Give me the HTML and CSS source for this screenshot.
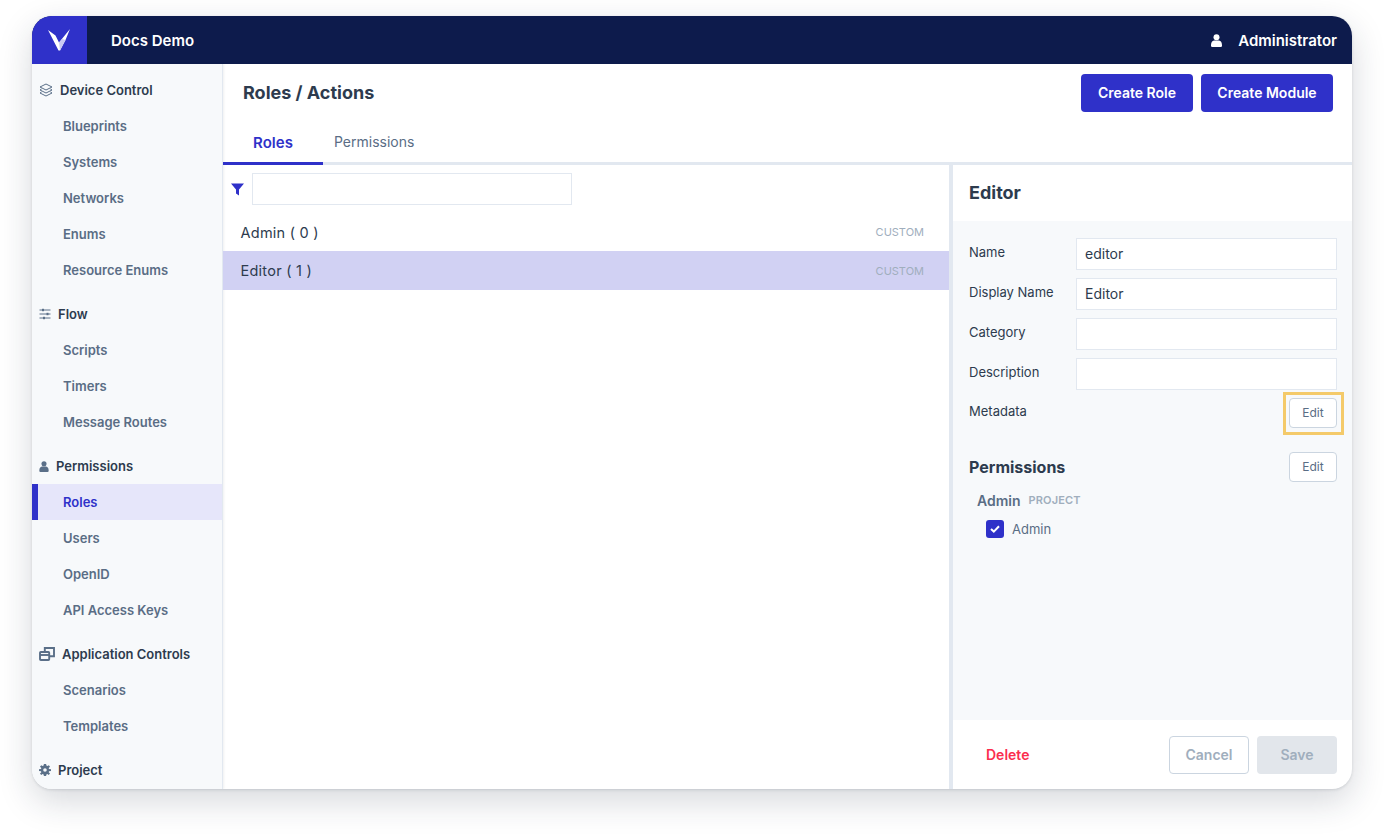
FILE: index.html
```html
<!DOCTYPE html>
<html lang="en">
<head>
<meta charset="utf-8">
<title>Roles / Actions</title>
<link rel="stylesheet" href="styles.css">
</head>
<body>
<div class="window">
  <header class="topbar">
    <div class="logo">
      <svg width="22" height="22" viewBox="0 0 22 22"><path d="M0 1 L7.5 6.5 L11 13.5 L22 0 L17.5 11 L12 21.5 L10.5 21.5 Z" fill="#fff"/><path d="M12 21.5 L11 13.5 L14 10 L17.5 11 Z" fill="#c9cbf3"/></svg>
    </div>
    <div class="app-name">Docs Demo</div>
    <div class="user">
      <svg class="user-icon" width="11" height="13" viewBox="0 0 11 13"><circle cx="5.5" cy="3.2" r="3" fill="#fff"/><path d="M0 11 C0 8 1.8 6.6 3.4 6.6 H7.6 C9.2 6.6 11 8 11 11 V11.8 Q11 13 9.8 13 H1.2 Q0 13 0 11.8 Z" fill="#fff"/></svg>
      <span>Administrator</span>
    </div>
  </header>
  <div class="content">
    <nav class="sidebar">
      <div class="nav-head">
        <svg class="nav-icon" width="14" height="14" viewBox="0 0 14 14" fill="none" stroke="#5a6f88" stroke-width="1" stroke-linejoin="round"><path d="M7 1 L13 4 L7 7 L1 4 Z"/><path d="M2.6 6 L1 7 L7 10 L13 7 L11.4 6"/><path d="M2.6 9 L1 10 L7 13 L13 10 L11.4 9"/></svg>
        <span class="head-label">Device Control</span>
      </div>
      <a class="nav-item">Blueprints</a>
      <a class="nav-item">Systems</a>
      <a class="nav-item">Networks</a>
      <a class="nav-item">Enums</a>
      <a class="nav-item">Resource Enums</a>
      <div class="nav-head spaced">
        <svg class="nav-icon" width="12" height="12" viewBox="0 0 12 12" fill="none" stroke="#5a6f88" stroke-width="1"><path d="M0.5 2 H11.5 M0.5 6 H11.5 M0.5 10 H11.5"/><rect x="3" y="0.8" width="2" height="2.4" fill="#5a6f88" stroke="none"/><rect x="7.5" y="4.8" width="2" height="2.4" fill="#5a6f88" stroke="none"/><rect x="4" y="8.8" width="2" height="2.4" fill="#5a6f88" stroke="none"/></svg>
        <span class="head-label">Flow</span>
      </div>
      <a class="nav-item">Scripts</a>
      <a class="nav-item">Timers</a>
      <a class="nav-item">Message Routes</a>
      <div class="nav-head spaced">
        <svg class="nav-icon" width="10" height="11" viewBox="0 0 11 13"><circle cx="5.5" cy="3.2" r="3" fill="#5a6f88"/><path d="M0 11 C0 8 1.8 6.6 3.4 6.6 H7.6 C9.2 6.6 11 8 11 11 V11.8 Q11 13 9.8 13 H1.2 Q0 13 0 11.8 Z" fill="#5a6f88"/></svg>
        <span class="head-label">Permissions</span>
      </div>
      <a class="nav-item active">Roles</a>
      <a class="nav-item">Users</a>
      <a class="nav-item">OpenID</a>
      <a class="nav-item">API Access Keys</a>
      <div class="nav-head spaced">
        <svg class="nav-icon" width="16" height="14" viewBox="0 0 16 14" fill="none" stroke="#5a6f88" stroke-width="1.9"><rect x="1" y="5" width="9.2" height="8" rx="0.8"/><path d="M1 8 H10.2"/><path d="M5.8 4.6 V1 H15 V9.2 H10.4"/></svg>
        <span class="head-label">Application Controls</span>
      </div>
      <a class="nav-item">Scenarios</a>
      <a class="nav-item">Templates</a>
      <div class="nav-head spaced">
        <svg class="nav-icon" width="12" height="12" viewBox="0 0 12 12"><path fill="#5a6f88" fill-rule="evenodd" d="M4.9 0 H7.1 L7.4 1.6 L8.5 2.1 L9.9 1.2 L11 2.8 L9.7 3.9 L10 5 L12 5.3 V6.9 L10 7.2 L9.7 8.2 L11 9.4 L9.7 11 L8.4 10 L7.4 10.4 L7.1 12 H4.9 L4.6 10.4 L3.5 10 L2.2 11 L1 9.4 L2.3 8.2 L2 7.2 L0 6.9 V5.2 L2 4.9 L2.3 3.9 L1 2.7 L2.2 1.2 L3.5 2.1 L4.6 1.6 Z M6 4.2 A1.8 1.8 0 1 0 6 7.8 A1.8 1.8 0 1 0 6 4.2 Z"/></svg>
        <span class="head-label">Project</span>
      </div>
    </nav>
    <main class="main">
      <div class="page-head">
        <h1 class="page-title">Roles / Actions</h1>
        <div class="page-actions">
          <button class="btn-primary btn-role">Create Role</button>
          <button class="btn-primary btn-module">Create Module</button>
        </div>
      </div>
      <div class="tabs">
        <div class="tab tab-active">Roles</div>
        <div class="tab tab-perm">Permissions</div>
      </div>
      <div class="panes">
        <section class="list-pane">
          <div class="filter">
            <svg width="13" height="13" viewBox="0 0 13 13"><path d="M0 0.5 H13 L8 6.5 V12.5 L5 10.5 V6.5 Z" fill="#2f31c9"/></svg>
            <div class="text-input filter-input"></div>
          </div>
          <div class="list-row"><span>Admin ( 0 )</span><span class="tag">CUSTOM</span></div>
          <div class="list-row selected"><span>Editor ( 1 )</span><span class="tag">CUSTOM</span></div>
        </section>
        <aside class="detail">
          <div class="detail-head">Editor</div>
          <div class="detail-body">
            <div class="field"><label>Name</label><div class="text-input value">editor</div></div>
            <div class="field"><label>Display Name</label><div class="text-input value">Editor</div></div>
            <div class="field"><label>Category</label><div class="text-input value"></div></div>
            <div class="field"><label>Description</label><div class="text-input value"></div></div>
            <div class="meta-row"><label>Metadata</label><div class="highlight"><button class="btn-edit">Edit</button></div></div>
            <div class="perm-row"><h2 class="perm-title">Permissions</h2><button class="btn-edit">Edit</button></div>
            <div class="perm-group"><strong>Admin</strong><span>PROJECT</span></div>
            <div class="perm-check">
              <span class="checkbox"><svg width="10" height="8" viewBox="0 0 10 8" fill="none" stroke="#fff" stroke-width="2"><path d="M1 4 L3.8 6.6 L9 1.2"/></svg></span>
              <span>Admin</span>
            </div>
          </div>
          <div class="detail-foot">
            <span class="delete">Delete</span>
            <div class="foot-actions">
              <button class="btn-cancel">Cancel</button>
              <button class="btn-save">Save</button>
            </div>
          </div>
        </aside>
      </div>
    </main>
  </div>
</div>
</body>
</html>
```
FILE: styles.css
```css
* { box-sizing: border-box; }
html, body { height: 100%; }
body {
  margin: 0;
  padding: 16px 32px 48px;
  background: #fff;
  font-family: Inter, "Liberation Sans", sans-serif;
  color: #2d3b4e;
  overflow: hidden;
}
button { font-family: inherit; cursor: pointer; padding: 0 0 2px; }
.window {
  width: 1320px;
  height: 773px;
  border-radius: 20px;
  overflow: hidden;
  display: flex;
  flex-direction: column;
  background: #fff;
  box-shadow: 0 12px 34px rgba(30, 40, 60, 0.18), 0 1px 3px rgba(30, 40, 60, 0.14);
}
.topbar {
  height: 48px;
  flex: none;
  display: flex;
  align-items: center;
  background: #0d1b4c;
  color: #fff;
  font-size: 15px;
  font-weight: 600;
}
.logo {
  width: 55px;
  height: 48px;
  background: #2f31c9;
  display: flex;
  align-items: center;
  justify-content: center;
  padding-right: 1px;
}
.app-name { margin-left: 24px; }
.user {
  margin-left: auto;
  margin-right: 15px;
  display: flex;
  align-items: center;
  gap: 16px;
}
.content { flex: 1; display: flex; min-height: 0; }
.sidebar {
  width: 191px;
  flex: none;
  background: #f7f9fb;
  border-right: 1px solid #e2e8f0;
  box-shadow: 1px 0 2px rgba(45, 59, 78, 0.08);
  overflow: hidden;
  padding-top: 8px;
  font-size: 13px;
  font-weight: 600;
}
.nav-head {
  height: 36px;
  padding-left: 7px;
  display: flex;
  align-items: center;
  color: #2d3b4e;
}
.nav-head.spaced { margin-top: 8px; }
.head-label { margin-left: 7px; }
.nav-item {
  display: flex;
  align-items: center;
  height: 36px;
  padding-left: 31px;
  color: #5a6d85;
}
.nav-item.active {
  background: #e6e6fa;
  color: #2f31c9;
  border-left: 6px solid #2f31c9;
  padding-left: 25px;
}
.main { flex: 1; min-width: 0; display: flex; flex-direction: column; }
.page-head {
  height: 58px;
  flex: none;
  display: flex;
  align-items: center;
  justify-content: space-between;
  padding: 0 19px 0 20px;
}
.page-title { margin: 0 0 2px; font-size: 18px; font-weight: 700; color: #2d3b4e; }
.page-actions { display: flex; gap: 8px; }
.btn-primary {
  height: 38px;
  border: 0;
  border-radius: 4px;
  background: #2f31c9;
  color: #fff;
  font-size: 14px;
  font-weight: 600;
}
.btn-role { width: 112px; }
.btn-module { width: 132px; }
.tabs {
  height: 43px;
  flex: none;
  display: flex;
  border-bottom: 3px solid #e2e8f0;
  font-size: 14px;
}
.tab {
  height: 43px;
  display: flex;
  align-items: center;
  justify-content: center;
  padding-bottom: 4px;
  color: #5a6d85;
}
.tab-active {
  width: 100px;
  color: #2f31c9;
  font-size: 15px;
  font-weight: 600;
  border-bottom: 3px solid #2f31c9;
  padding-bottom: 0;
}
.tab-perm { margin-left: 11px; }
.panes { flex: 1; display: flex; min-height: 0; }
.list-pane {
  width: 730px;
  flex: none;
  border-right: 4px solid #e2e8f0;
}
.filter {
  height: 48px;
  padding: 8px 0 8px 8px;
  display: flex;
  align-items: center;
  gap: 8px;
}
.text-input {
  height: 32px;
  background: #fff;
  border: 1px solid #e2e8f0;
}
.filter-input { width: 320px; }
.list-row {
  height: 38px;
  display: flex;
  align-items: center;
  justify-content: space-between;
  padding: 0 25px 0 17.5px;
  font-size: 14.5px;
  letter-spacing: 0.25px;
  color: #2d3b4e;
}
.list-row.selected { background: #d1d1f3; height: 39px; }
.tag { font-size: 11px; letter-spacing: 0; color: #a0aebd; }
.detail { flex: 1; min-width: 0; display: flex; flex-direction: column; }
.detail-head {
  height: 56px;
  flex: none;
  display: flex;
  align-items: center;
  padding: 0 0 1px 16px;
  font-size: 18px;
  font-weight: 700;
  color: #2d3b4e;
}
.detail-body {
  flex: 1;
  background: #f7f9fb;
  padding: 17px 15px 0 16px;
  font-size: 13px;
  color: #2d3b4e;
}
.field {
  height: 32px;
  margin-bottom: 8px;
  display: flex;
  align-items: center;
}
.field label { width: 107px; flex: none; padding-bottom: 4px; }
.value {
  flex: 1;
  display: flex;
  align-items: center;
  padding: 0 0 2px 8px;
  font-size: 14px;
  color: #2d3b4e;
}
.meta-row {
  height: 30px;
  display: flex;
  align-items: center;
  justify-content: space-between;
}
.meta-row label { padding-bottom: 4px; }
.highlight {
  margin: -6px -7px -7px -6px;
  padding: 3px 4px 4px 3px;
  border: 3px solid #f4ca6a;
  display: flex;
}
.btn-edit {
  width: 48px;
  height: 30px;
  background: #fff;
  border: 1px solid #cbd5e0;
  border-radius: 4px;
  font-size: 12px;
  color: #5a6d85;
}
.perm-row {
  height: 30px;
  margin-top: 24px;
  display: flex;
  align-items: center;
  justify-content: space-between;
}
.perm-title { margin: 0; font-size: 16px; font-weight: 700; color: #2d3b4e; }
.perm-group {
  margin-top: 8px;
  height: 20px;
  padding-left: 8px;
  display: flex;
  align-items: center;
  gap: 8px;
  font-size: 14px;
  color: #5a6d85;
}
.perm-group strong { font-weight: 600; }
.perm-group span { font-size: 11px; font-weight: 600; color: #a0aebd; letter-spacing: 0.15px; }
.perm-check {
  margin-top: 10px;
  padding-left: 17px;
  display: flex;
  align-items: center;
  gap: 8px;
  color: #5a6d85;
}
.checkbox {
  width: 18px;
  height: 18px;
  border-radius: 3px;
  background: #2f31c9;
  display: flex;
  align-items: center;
  justify-content: center;
}
.detail-foot {
  height: 69px;
  flex: none;
  display: flex;
  align-items: center;
  justify-content: space-between;
  padding: 0 15px 0 33px;
  font-size: 14px;
  font-weight: 600;
}
.delete { color: #fb2d4e; }
.foot-actions { display: flex; gap: 8px; }
.btn-cancel, .btn-save {
  width: 80px;
  height: 38px;
  padding: 0;
  border-radius: 4px;
  font-size: 14px;
  font-weight: 600;
  color: #a0aebd;
}
.btn-cancel { background: #fff; border: 1px solid #cbd5e0; }
.btn-save { background: #e2e6eb; border: 0; }
```
